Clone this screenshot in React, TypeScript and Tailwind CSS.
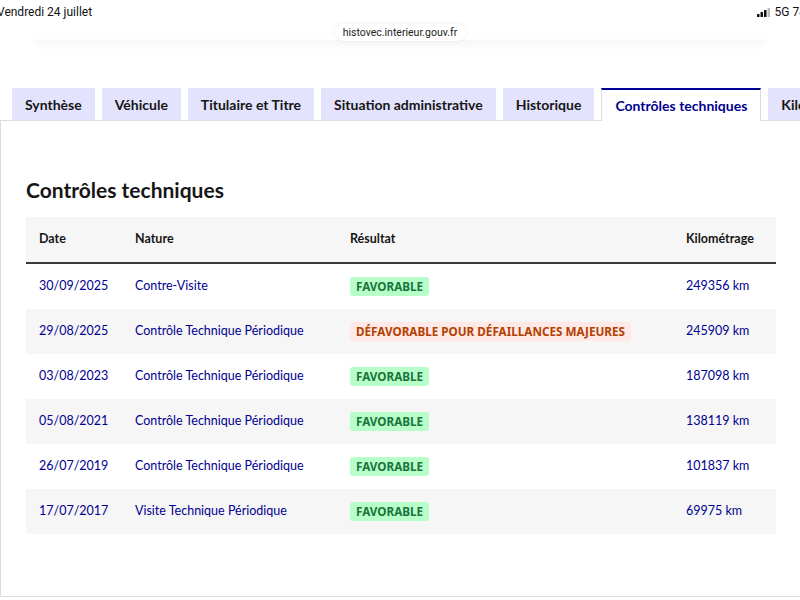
import React from 'react'

const tabs = ['Synthèse', 'Véhicule', 'Titulaire et Titre', 'Situation administrative', 'Historique', 'Contrôles techniques', 'Kilométrage']

const rows = [
  { date: '30/09/2025', nature: 'Contre-Visite', ok: true, km: '249356 km' },
  { date: '29/08/2025', nature: 'Contrôle Technique Périodique', ok: false, km: '245909 km' },
  { date: '03/08/2023', nature: 'Contrôle Technique Périodique', ok: true, km: '187098 km' },
  { date: '05/08/2021', nature: 'Contrôle Technique Périodique', ok: true, km: '138119 km' },
  { date: '26/07/2019', nature: 'Contrôle Technique Périodique', ok: true, km: '101837 km' },
  { date: '17/07/2017', nature: 'Visite Technique Périodique', ok: true, km: '69975 km' },
]

export default function App() {
  return (
    <div className="w-[800px] h-[600px] overflow-hidden bg-white relative" style={{ fontFamily: 'Lato, "Noto Sans", sans-serif' }}>
      {/* status bar */}
      <div className="h-[24px] flex items-center justify-between text-[12px] text-[#111]" style={{ fontFamily: 'Roboto, sans-serif' }}>
        <span className="-ml-[3px]">Vendredi 24 juillet</span>
        <span className="flex items-center gap-1 -mr-[6px]">
          <svg width="14" height="9" viewBox="0 0 14 9">
            <rect x="0" y="6" width="2.5" height="3" rx="0.5" fill="#111" />
            <rect x="3.5" y="4" width="2.5" height="5" rx="0.5" fill="#111" />
            <rect x="7" y="2" width="2.5" height="7" rx="0.5" fill="#111" />
            <rect x="10.5" y="0" width="2.5" height="9" rx="0.5" fill="#bbb" />
          </svg>
          <span>5G 74</span>
        </span>
      </div>
      <div className="relative h-[24px]">
        <div className="absolute left-[36px] right-[36px] top-[10px] h-[6px] shadow-[0_4px_8px_rgba(0,0,0,0.06)]" />
        <div className="absolute left-1/2 -translate-x-1/2 top-0 h-[17px] px-[8px] flex items-center rounded-full bg-white shadow-[0_0_4px_rgba(0,0,0,0.08)] text-[10.5px] text-[#222]" style={{ fontFamily: 'Roboto, sans-serif' }}>
          histovec.interieur.gouv.fr
        </div>
      </div>

      {/* tabs */}
      <div className="mt-[40px] flex items-end gap-[7px] pl-[12px] whitespace-nowrap">
        {tabs.map((t) =>
          t === 'Contrôles techniques' ? (
            <div key={t} className="h-[33px] px-[13px] flex items-center bg-white border-t-2 border-x border-[#000091] border-x-[#ddd] text-[14px] font-bold text-[#000091] relative z-10 -mb-px">
              {t}
            </div>
          ) : (
            <div key={t} className="h-[32px] px-[13px] flex items-center bg-[#e3e3fd] text-[14px] font-bold text-[#161616]">
              {t}
            </div>
          )
        )}
      </div>

      {/* panel */}
      <div className="border border-[#ddd] border-r-0 h-[477px] pt-[55px] px-[25px]">
        <h1 className="text-[21px] font-bold text-[#161616] leading-[28px] mb-[13px]">Contrôles techniques</h1>
        <div className="w-[750px]">
          <div className="flex items-center h-[47px] bg-[#f6f6f6] border-b-2 border-[#3a3a3a] text-[12.5px] font-bold text-[#161616]">
            <div className="w-[96px] pl-[13px]">Date</div>
            <div className="w-[215px] pl-[13px]">Nature</div>
            <div className="w-[336px] pl-[13px]">Résultat</div>
            <div className="flex-1 pl-[13px]">Kilométrage</div>
          </div>
          {rows.map((r, i) => (
            <div key={r.date} className={`flex items-center h-[45px] text-[12.5px] text-[#000091] ${i % 2 ? 'bg-[#f6f6f6]' : 'bg-white'}`}>
              <div className="w-[96px] pl-[13px]">{r.date}</div>
              <div className="w-[215px] pl-[13px]">{r.nature}</div>
              <div className="w-[336px] pl-[13px]" style={{ fontFamily: '"Noto Sans", sans-serif' }}>
                {r.ok ? (
                  <span className="inline-block px-[6px] leading-[19px] rounded-[3px] bg-[#b8fec9] text-[#18753c] text-[11.7px] font-bold">FAVORABLE</span>
                ) : (
                  <span className="inline-block px-[6px] leading-[19px] rounded-[3px] bg-[#ffe9e6] text-[#b34000] text-[11.7px] font-bold">DÉFAVORABLE POUR DÉFAILLANCES MAJEURES</span>
                )}
              </div>
              <div className="flex-1 pl-[13px]">{r.km}</div>
            </div>
          ))}
        </div>
      </div>
    </div>
  )
}
